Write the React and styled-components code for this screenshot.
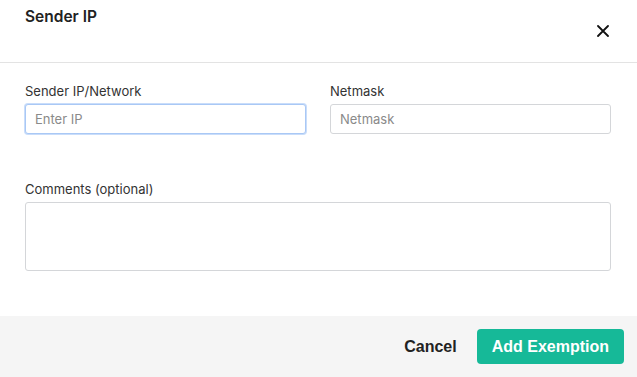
import React from 'react';
import styled, { createGlobalStyle } from 'styled-components';

const GlobalStyle = createGlobalStyle`
  html, body {
    margin: 0;
    padding: 0;
    background: #ffffff;
  }
  body {
    font-family: Inter, "Liberation Sans", Arial, sans-serif;
    color: #222;
  }
`;

const Styled = {
  Modal: styled.div`
    width: 637px;
    height: 377px;
    display: flex;
    flex-direction: column;
    background: #fff;
  `,
  Header: styled.header`
    height: 63px;
    box-sizing: border-box;
    display: flex;
    justify-content: space-between;
    padding: 0 24px 0 25px;
    border-bottom: 1px solid #e3e3e3;
  `,
  Title: styled.h2`
    margin: 0;
    padding-top: 7px;
    font-size: 15.5px;
    font-weight: 600;
    line-height: 20px;
    color: #222;
  `,
  Close: styled.button`
    align-self: center;
    width: 20px;
    height: 20px;
    padding: 0;
    border: 0;
    background: none;
    display: flex;
    align-items: center;
    justify-content: center;
    cursor: pointer;
  `,
  Body: styled.div`
    flex: 1;
    padding: 20px 26px 0 25px;
    display: flex;
    flex-direction: column;
    gap: 47px;
  `,
  Row: styled.div`
    display: grid;
    grid-template-columns: 1fr 1fr;
    column-gap: 24px;
  `,
  Field: styled.label`
    display: flex;
    flex-direction: column;
    gap: 4px;
  `,
  Label: styled.span`
    font-size: 13px;
    line-height: 17px;
    color: #333;
  `,
  Input: styled.input`
    box-sizing: border-box;
    height: 30px;
    padding: 0 9px;
    font-family: Inter, "Liberation Sans", Arial, sans-serif;
    font-size: 13px;
    color: #333;
    border: 1px solid ${({ $focused }) => ($focused ? '#a9c8f5' : '#d4d6d9')};
    box-shadow: ${({ $focused }) => ($focused ? '0 0 0 1px #c9ddfa' : 'none')};
    border-radius: 3px;
    outline: none;
    &::placeholder {
      color: #8a8a8a;
    }
  `,
  TextArea: styled.textarea`
    box-sizing: border-box;
    height: 69px;
    resize: none;
    font-family: Inter, "Liberation Sans", Arial, sans-serif;
    font-size: 13px;
    border: 1px solid #d4d6d9;
    border-radius: 3px;
    outline: none;
  `,
  Footer: styled.footer`
    height: 61px;
    box-sizing: border-box;
    background: #f5f5f5;
    display: flex;
    justify-content: flex-end;
    align-items: flex-start;
    padding: 13px 13px 0 0;
    gap: 20px;
  `,
  Button: styled.button`
    height: 35px;
    padding: ${({ $primary }) => ($primary ? '0 15px' : '0')};
    border: 0;
    border-radius: 4px;
    font-family: "Liberation Sans", Arial, sans-serif;
    font-size: 16px;
    font-weight: 700;
    color: ${({ $primary }) => ($primary ? '#fff' : '#222')};
    background: ${({ $primary }) => ($primary ? '#16b998' : 'transparent')};
    cursor: pointer;
  `,
};

const CloseIcon = () => (
  <svg width="12" height="12" viewBox="0 0 12 12">
    <path d="M1 1 L11 11 M11 1 L1 11" stroke="#111" strokeWidth="1.8" strokeLinecap="round" />
  </svg>
);

const App = () => {
  return (
    <>
      <GlobalStyle />
      <Styled.Modal>
        <Styled.Header>
          <Styled.Title>Sender IP</Styled.Title>
          <Styled.Close aria-label="Close">
            <CloseIcon />
          </Styled.Close>
        </Styled.Header>
        <Styled.Body>
          <Styled.Row>
            <Styled.Field>
              <Styled.Label>Sender IP/Network</Styled.Label>
              <Styled.Input $focused placeholder="Enter IP" />
            </Styled.Field>
            <Styled.Field>
              <Styled.Label>Netmask</Styled.Label>
              <Styled.Input placeholder="Netmask" />
            </Styled.Field>
          </Styled.Row>
          <Styled.Field>
            <Styled.Label>Comments (optional)</Styled.Label>
            <Styled.TextArea />
          </Styled.Field>
        </Styled.Body>
        <Styled.Footer>
          <Styled.Button>Cancel</Styled.Button>
          <Styled.Button $primary>Add Exemption</Styled.Button>
        </Styled.Footer>
      </Styled.Modal>
    </>
  );
};

export default App;
